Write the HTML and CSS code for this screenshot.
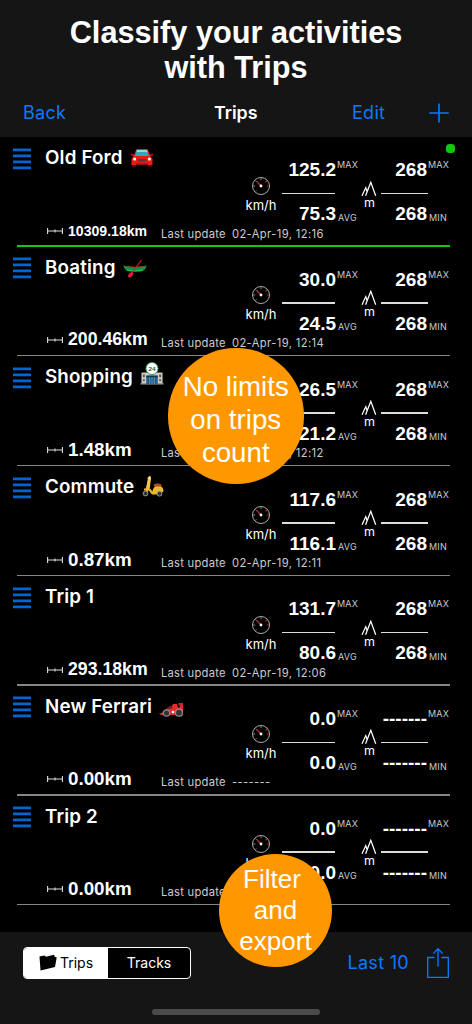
FILE: index.html
```html
<!DOCTYPE html>
<html lang="en">
<head>
<meta charset="utf-8">
<title>Trips</title>
<link rel="stylesheet" href="styles.css">
</head>
<body>
<svg class="defs" width="0" height="0">
  <symbol id="handle" viewBox="0 0 18 22"><path d="M0 1.9h18M0 7.9h18M0 13.9h18M0 19.9h18" stroke="#0064d2" stroke-width="2.6"/></symbol>
  <symbol id="span" viewBox="0 0 16 8"><path d="M.6 1v6M15.4 1v6M.6 4h14.800M8 2.500v3" stroke="#ddd" stroke-width="1.100" fill="none"/></symbol>
  <symbol id="gauge" viewBox="0 0 20 20"><circle cx="10" cy="10" r="8.500" fill="none" stroke="#aaa" stroke-width="1"/><path d="M10 2.200v2M2.200 10h2M4.400 4.600l1.200 1.200M4.400 15.400l1-1" stroke="#999" stroke-width=".9"/><path d="M10 10L5.800 5.500M14.400 6.400l1.600-1.600M15.800 10h2" stroke="#c22" stroke-width="1.100"/><circle cx="10" cy="10" r="1.400" fill="#fff"/></symbol>
  <symbol id="peaks" viewBox="0 0 16 16"><path d="M1 14.800L4.800 6.600l1.500 4.600M4.600 14.800L9.800 1.300l4.900 13.500" stroke="#fff" stroke-width="1.250" fill="none"/></symbol>
</svg>
<header class="header">
  <h1 class="headline">Classify your activities<br>with Trips</h1>
  <nav class="nav">
    <a class="link back">Back</a>
    <span class="title">Trips</span>
    <a class="link edit">Edit</a>
    <svg class="plus" viewBox="0 0 20 20"><path d="M10 .5v19M.3 10h19.400" stroke="#0a7aff" stroke-width="1.600"/></svg>
  </nav>
</header>
<main class="list">
  <section class="trip active">
    <div class="top">
      <svg class="handle"><use href="#handle"/></svg>
      <h2 class="name"><span>Old Ford</span>
        <svg class="emoji" viewBox="0 0 24 20"><path d="M1 6.500l3 1M23 6.500l-3 1" stroke="#b01010" stroke-width="2"/><path d="M6.500 1h11l3 7 2 3v6H1.500v-6l2-3z" fill="#e81c16"/><path d="M7 2h10l2 6H5z" fill="#37a6bd"/><path d="M7 2h10l.6 2H6.400z" fill="#8bd9e2"/><path d="M2 17h4v2H2zM18 17h4v2h-4z" fill="#40100e"/><path d="M8 11h8v2.500H8z" fill="#5a3638"/><circle cx="4.600" cy="11" r="1.500" fill="#fff"/><circle cx="19.400" cy="11" r="1.500" fill="#fff"/><path d="M6 15.500h12v1.500H6z" fill="#8a1010"/></svg></h2>
      <div class="unit speed"><svg class="gauge"><use href="#gauge"/></svg>km/h</div>
      <div class="stats"><p class="value">125.2</p><small class="max">MAX</small><hr><p class="value">75.3</p><small>AVG</small></div>
      <div class="unit height"><svg class="peaks"><use href="#peaks"/></svg>m</div>
      <div class="stats alt"><p class="value">268</p><small class="max">MAX</small><hr><p class="value">268</p><small>MIN</small></div>
    </div>
    <div class="bottom"><svg class="span"><use href="#span"/></svg><b class="dist small">10309.18km</b><span class="label">Last update</span><time>02-Apr-19, 12:16</time></div>
    <i class="dot"></i>
  </section>
  <section class="trip">
    <div class="top">
      <svg class="handle"><use href="#handle"/></svg>
      <h2 class="name"><span>Boating</span>
        <svg class="emoji" viewBox="0 0 24 20"><path d="M.5 7.500c4 2.500 19 2.500 23 0-.5 4-3 5.500-6 6H6.500c-3-.5-5.500-2-6-6z" fill="#109447"/><path d="M.5 7.500c6 1.500 17 1.500 23 0-5 3-18 3-23 0z" fill="#8c5c24"/><path d="M4 12c5 1.300 11 1.300 16 0" stroke="#38bd5e" fill="none"/><path d="M18.500 2L8.500 15.500" stroke="#d51c31" stroke-width="1.200"/><path d="M9 14l1.500 1.500c-1 3-3 4.500-5 4-1-2 0-4.500 3.500-5.500z" fill="#df2037"/></svg></h2>
      <div class="unit speed"><svg class="gauge"><use href="#gauge"/></svg>km/h</div>
      <div class="stats"><p class="value">30.0</p><small class="max">MAX</small><hr><p class="value">24.5</p><small>AVG</small></div>
      <div class="unit height"><svg class="peaks"><use href="#peaks"/></svg>m</div>
      <div class="stats alt"><p class="value">268</p><small class="max">MAX</small><hr><p class="value">268</p><small>MIN</small></div>
    </div>
    <div class="bottom"><svg class="span"><use href="#span"/></svg><b class="dist medium">200.46km</b><span class="label">Last update</span><time>02-Apr-19, 12:14</time></div>
  </section>
  <section class="trip">
    <div class="top">
      <svg class="handle"><use href="#handle"/></svg>
      <h2 class="name"><span>Shopping</span>
        <svg class="emoji store" viewBox="0 0 24 24"><path d="M1 11h22v12H1z" fill="#d3cdb9"/><path d="M0 22h24v1.500H0z" fill="#8c969a"/><path d="M6 15h12v8H6z" fill="#245d8c"/><path d="M6 14h12v2H6z" fill="#153755"/><path d="M9.500 16v7M12 16v7M14.500 16v7" stroke="#78aac6" stroke-width=".7"/><path d="M2.500 13h2v3h-2zM2.500 18h2v2h-2zM19.500 13h2v3h-2zM19.500 18h2v2h-2z" fill="#3b6179"/><circle cx="12" cy="6.800" r="6.300" fill="#fff" stroke="#2a9d5d" stroke-width="1"/><text x="12" y="9.300" text-anchor="middle" class="sign">24</text></svg></h2>
      <div class="unit speed"><svg class="gauge"><use href="#gauge"/></svg>km/h</div>
      <div class="stats"><p class="value">26.5</p><small class="max">MAX</small><hr><p class="value">21.2</p><small>AVG</small></div>
      <div class="unit height"><svg class="peaks"><use href="#peaks"/></svg>m</div>
      <div class="stats alt"><p class="value">268</p><small class="max">MAX</small><hr><p class="value">268</p><small>MIN</small></div>
    </div>
    <div class="bottom"><svg class="span"><use href="#span"/></svg><b class="dist">1.48km</b><span class="label">Last update</span><time>02-Apr-19, 12:12</time></div>
  </section>
  <section class="trip">
    <div class="top">
      <svg class="handle"><use href="#handle"/></svg>
      <h2 class="name"><span>Commute</span>
        <svg class="emoji scooter" viewBox="0 0 24 22"><path d="M8 3.500L5.800 17M3 14.500h5.500l3 4h7" stroke="#edb82b" stroke-width="2.200" fill="none"/><path d="M7.500 2.500l2.500 1-1.300 10-4 1z" fill="#f3c53c"/><path d="M11 17.500c1-4.500 3-7 6-7 3.500.2 5.500 2.500 5.500 6l-4.500 2.500h-6z" fill="#edb82b"/><path d="M12.500 9.500c2-1.500 6-1.200 8 .3v1.700h-7z" fill="#a64d2e"/><path d="M6.500 3.500l3-2.500" stroke="#a6977a" stroke-width="1.300"/><circle cx="8.500" cy="3" r="1.500" fill="#ffe078"/><circle cx="4.500" cy="18.500" r="2.400" fill="#333" stroke="#999"/><circle cx="18.500" cy="18.700" r="2.400" fill="#333" stroke="#999"/></svg></h2>
      <div class="unit speed"><svg class="gauge"><use href="#gauge"/></svg>km/h</div>
      <div class="stats"><p class="value">117.6</p><small class="max">MAX</small><hr><p class="value">116.1</p><small>AVG</small></div>
      <div class="unit height"><svg class="peaks"><use href="#peaks"/></svg>m</div>
      <div class="stats alt"><p class="value">268</p><small class="max">MAX</small><hr><p class="value">268</p><small>MIN</small></div>
    </div>
    <div class="bottom"><svg class="span"><use href="#span"/></svg><b class="dist">0.87km</b><span class="label">Last update</span><time>02-Apr-19, 12:11</time></div>
  </section>
  <section class="trip">
    <div class="top">
      <svg class="handle"><use href="#handle"/></svg>
      <h2 class="name"><span>Trip 1</span></h2>
      <div class="unit speed"><svg class="gauge"><use href="#gauge"/></svg>km/h</div>
      <div class="stats"><p class="value">131.7</p><small class="max">MAX</small><hr><p class="value">80.6</p><small>AVG</small></div>
      <div class="unit height"><svg class="peaks"><use href="#peaks"/></svg>m</div>
      <div class="stats alt"><p class="value">268</p><small class="max">MAX</small><hr><p class="value">268</p><small>MIN</small></div>
    </div>
    <div class="bottom"><svg class="span"><use href="#span"/></svg><b class="dist medium">293.18km</b><span class="label">Last update</span><time>02-Apr-19, 12:06</time></div>
  </section>
  <section class="trip">
    <div class="top">
      <svg class="handle"><use href="#handle"/></svg>
      <h2 class="name"><span>New Ferrari</span>
        <svg class="emoji racer" viewBox="0 0 24 14"><path d="M0 10.500l3-.5c2-3 6-5 9-5l2-4 4 0 1 4 2-1V.5h3V11l-5 1H2z" fill="#ea2b2b"/><path d="M19.500 0H24v2.500h-4.500z" fill="#cf1f27"/><path d="M7 5.500l5-3 2 2.500-5 1.500z" fill="#7d1d20"/><circle cx="7.500" cy="10" r="3.200" fill="#333" stroke="#8c8c8c" stroke-width="1.200"/><circle cx="20" cy="9.700" r="3.500" fill="#333" stroke="#8c8c8c" stroke-width="1.200"/><circle cx="14" cy="9" r="1.300" fill="#fff"/></svg></h2>
      <div class="unit speed"><svg class="gauge"><use href="#gauge"/></svg>km/h</div>
      <div class="stats"><p class="value">0.0</p><small class="max">MAX</small><hr><p class="value">0.0</p><small>AVG</small></div>
      <div class="unit height"><svg class="peaks"><use href="#peaks"/></svg>m</div>
      <div class="stats alt"><p class="value">-------</p><small class="max">MAX</small><hr><p class="value">-------</p><small>MIN</small></div>
    </div>
    <div class="bottom"><svg class="span"><use href="#span"/></svg><b class="dist">0.00km</b><span class="label">Last update</span><time class="blank">-------</time></div>
  </section>
  <section class="trip">
    <div class="top">
      <svg class="handle"><use href="#handle"/></svg>
      <h2 class="name"><span>Trip 2</span></h2>
      <div class="unit speed"><svg class="gauge"><use href="#gauge"/></svg>km/h</div>
      <div class="stats"><p class="value">0.0</p><small class="max">MAX</small><hr><p class="value">0.0</p><small>AVG</small></div>
      <div class="unit height"><svg class="peaks"><use href="#peaks"/></svg>m</div>
      <div class="stats alt"><p class="value">-------</p><small class="max">MAX</small><hr><p class="value">-------</p><small>MIN</small></div>
    </div>
    <div class="bottom"><svg class="span"><use href="#span"/></svg><b class="dist">0.00km</b><span class="label">Last update</span></div>
  </section>
</main>
<footer class="footer">
  <div class="toolbar">
    <div class="segments">
      <div class="segment selected"><svg class="folder" viewBox="0 0 18 17"><path d="M.5 2.500l5-1 1.500 1.300L15 .8l.7 2 2 .6L16 13 1.500 16.500z" fill="#000"/></svg><span>Trips</span></div>
      <div class="segment">Tracks</div>
    </div>
    <a class="link last">Last 10</a>
    <svg class="share" viewBox="0 0 24 32"><path d="M8.500 10.500H1.700v19.800h20.600V10.500h-6.800M12 19.500V2M7.300 6.600L12 1.700l4.700 4.900" fill="none" stroke="#0a7aff" stroke-width="1.300"/></svg>
  </div>
  <div class="home"></div>
</footer>
<aside class="bubble limits">No limits<br>on trips<br>count</aside>
<aside class="bubble filter"><span class="lead">Filter</span><span>and</span><span>export</span></aside>
</body>
</html>
```
FILE: styles.css
```css
* { box-sizing: border-box; }
body { margin: 0; width: 472px; height: 1024px; position: relative; overflow: hidden; background: #000; color: #fff; font-family: Inter, "Liberation Sans", sans-serif; display: flex; flex-direction: column; }
h1, h2, p { margin: 0; }
svg { display: block; flex: none; }
.defs { position: absolute; }
.link { color: #0a7aff; font-size: 18px; letter-spacing: .3px; }

.header { height: 136.500px; flex: none; background: #151515; padding-top: 15px; }
.headline { font: bold 30.700px/35px "Liberation Sans", Arial, sans-serif; text-align: center; }
.nav { display: grid; grid-template-columns: 191px 138px 1fr 20px; padding: 0 23px; height: 55px; align-items: center; line-height: 24px; }
.title { font-size: 17.800px; font-weight: 600; }
.plus { width: 20px; height: 20px; }

.list { height: 795.500px; flex: none; }
.trip { height: 109.800px; position: relative; }
.trip::after { content: ""; display: block; height: 1.300px; margin: -1px 22px 0 17px; background: #858585; }
.trip.active::after { background: #10c80c; height: 1.600px; }
.dot { position: absolute; right: 17.500px; top: 7.500px; width: 9px; height: 9px; border-radius: 3.500px; background: #10c80c; }
.top { height: 88px; display: grid; grid-template-columns: 33px 196px 40px 77px 23px 69px; padding-left: 12px; }
.handle { width: 18px; height: 22px; margin: 11px 0 0 1px; }
.name { font-size: 18.800px; font-weight: 600; line-height: 22px; padding-top: 10.300px; display: flex; gap: 7px; letter-spacing: .15px; }
.name span { white-space: nowrap; }
.emoji { width: 24px; height: 20px; margin-top: 1px; }
.store { height: 23px; margin-top: -4px; }
.scooter { width: 24px; height: 22px; margin-top: -1px; }
.racer { height: 14px; margin-top: 7px; }
.sign { font: bold 6.500px "Liberation Sans", sans-serif; fill: #245d45; }
.unit { font-size: 13px; line-height: 14px; display: flex; flex-direction: column; align-items: center; }
.speed { padding-top: 39px; }
.gauge { width: 20px; height: 20px; margin-bottom: 2px; }
.height { padding-top: 44px; font-size: 12.500px; }
.peaks { width: 16px; height: 16px; margin-bottom: -1px; margin-right: 1px; }
.stats { display: grid; grid-template-columns: 55px 22px; grid-template-rows: 32.500px 2px 9.500px 20px; padding-top: 23.700px; }
.stats.alt { grid-template-columns: 46px 23px; }
.value { font: bold 19px/20px "Liberation Sans", Arial, sans-serif; text-align: right; }
.stats hr { grid-column: 1 / 3; width: 53px; height: 1.500px; margin: 0 0 0 .5px; border: 0; background: #ddd; }
.stats.alt hr { width: 47px; margin-left: -.5px; }
.stats hr ~ .value, .stats hr ~ small { grid-row: 4; }
.stats small { font-size: 9px; line-height: 10px; color: #ccc; letter-spacing: .2px; padding: 8.500px 0 0 2px; }
.stats .max { padding: 0 0 0 1px; }
.bottom { height: 21.800px; display: grid; grid-template-columns: 21px 93px 71px 1fr; padding-left: 47px; line-height: 19.200px; }
.span { width: 16px; height: 8px; margin-top: 2px; }
.dist { font-family: "Liberation Sans", Arial, sans-serif; font-size: 18.800px; line-height: 11px; }
.medium { font-size: 17.700px; }
.small { font-size: 14.100px; line-height: 12px; }
.label, time { font-size: 11.200px; color: #ccc; white-space: nowrap; letter-spacing: .25px; }
time { letter-spacing: .37px; }

.footer { height: 92px; background: #151515; }
.toolbar { display: flex; align-items: center; height: 61px; padding: 0 22px 0 23px; }
.segments { width: 168px; height: 32px; border: 1px solid #fff; border-radius: 4px; display: flex; overflow: hidden; background: #000; font-size: 14px; }
.segment { flex: 1; display: flex; align-items: center; justify-content: center; gap: 3px; }
.selected { flex: 0 0 84px; background: #fff; color: #000; }
.folder { width: 18px; height: 17px; }
.last { margin-left: auto; margin-right: 17px; }
.share { width: 24px; height: 32px; }
.home { width: 168px; height: 6px; border-radius: 3px; background: #4b4b4b; margin: 16px auto 0; }

.bubble { position: absolute; display: flex; align-items: center; justify-content: center; text-align: center; border-radius: 50%; background: #ff9800; font-family: "Liberation Sans", Arial, sans-serif; }
.limits { left: 168px; top: 348px; width: 135.500px; height: 135.500px; font-size: 27.700px; line-height: 33px; padding-top: 8px; }
.filter { left: 219px; top: 854px; width: 113px; height: 113px; font-size: 26px; line-height: 31px; flex-direction: column; }
.lead { padding-right: 7px; }
```
